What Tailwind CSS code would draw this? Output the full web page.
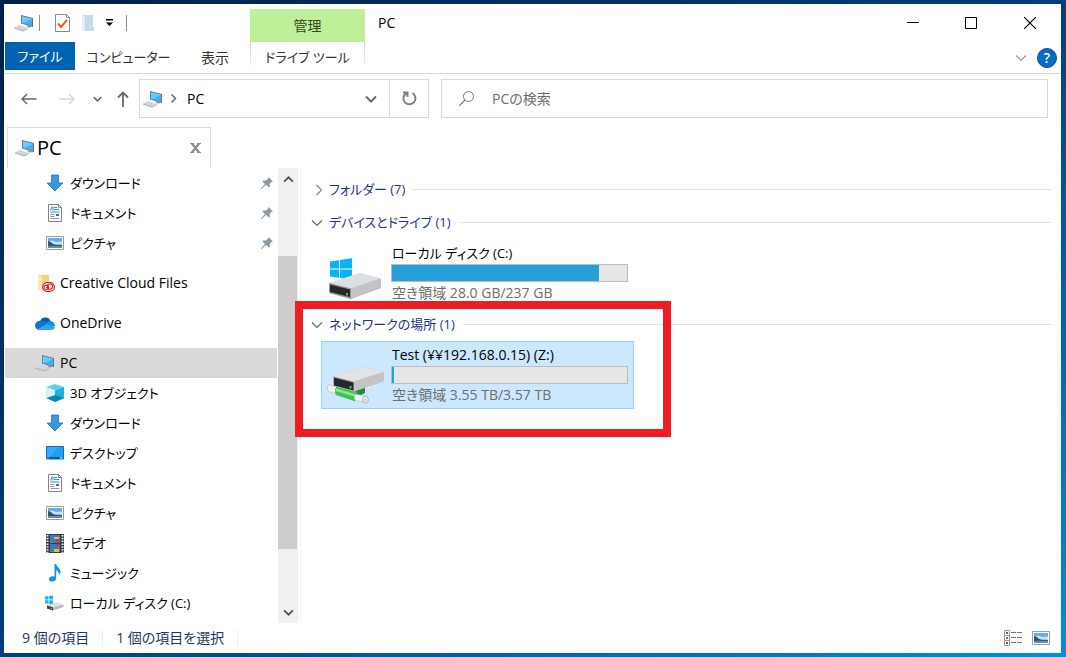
<!DOCTYPE html>
<html lang="ja">
<head>
  <meta charset="UTF-8" />
  <meta name="viewport" content="width=device-width, initial-scale=1.0" />
  <title>PC</title>
  <script src="https://cdn.jsdelivr.net/npm/@tailwindcss/browser@4"></script>
</head>
<body class="flex h-screen overflow-hidden bg-linear-to-br from-[#00204a] via-[#003f7d] to-[#0090dc] p-1 pr-[5px] font-['Open_Sans','Noto_Sans_CJK_JP',sans-serif] text-sm text-black [font-feature-settings:'palt']">

  <!-- アイコン定義 -->
  <svg class="hidden">
    <symbol id="i-pc" viewBox="0 0 20 18">
      <path d="M7 1l12 3v9L7 9.500z" fill="#5d6b76" />
      <path d="M7.800 2l10.400 2.700v7.200L7.800 8.900z" fill="#3fb0f5" />
      <path d="M7.800 2l10.400 2.700L9 9.200l-1.200-.3z" fill="#6cc8fb" />
      <path d="M12 12l3-1 3 1.500-3 1.300z" fill="#8b969e" />
      <path d="M0 13.500L5.500 11l8.500 3.200-5 2.800z" fill="#cfd6dc" />
      <path d="M0 13.500l9 3 5-2.300v.8l-5 2.500-9-3z" fill="#a5afb7" />
    </symbol>
    <symbol id="i-down" viewBox="0 0 18 18">
      <path d="M5.500 1h7v8H17l-8 8-8-8h4.500z" fill="#3b95e0" stroke="#2a77c4" stroke-width=".8" />
    </symbol>
    <symbol id="i-doc" viewBox="0 0 18 18">
      <path d="M2.500.5h10l3 3v14h-13z" fill="#fcfcfc" stroke="#858585" />
      <path d="M12.500.5v3h3" fill="none" stroke="#858585" />
      <path d="M4.500 6.500L6 3h1v3.500M8 3.500h3M8 5.500h5M4.500 8h9" fill="none" stroke="#2f8fd8" />
      <path d="M4.500 10.500h4M4.500 12.500h4M4.500 14.500h9" stroke="#9a9a9a" />
      <path d="M10 10h3v2h-3z" fill="#3c6e9e" />
    </symbol>
    <symbol id="i-pic" viewBox="0 0 18 14">
      <path d="M.5.500h17v13H.5z" fill="#fff" stroke="#9b9da0" />
      <path d="M2 2h14v10H2z" fill="#6aa9f0" />
      <path d="M2 5.500l4-1 4 1.500 6-.5V9H2z" fill="#c9e4f7" />
      <path d="M2 5c3 0 4 3 7 3.500s5 0 7 .5v1H2z" fill="#36566a" />
      <path d="M2 10h14v2H2z" fill="#5f8fb5" />
    </symbol>
    <symbol id="i-pin" viewBox="0 0 12 12">
      <path d="M7.500 0L12 4.500l-1.300.3-2 2.200.2 2.800-1 .7-2.800-2.700L.8 12 0 11.500l4-4.400L1.500 4.400l.8-1 2.700.2 2-2.200z" fill="#8d99a3" />
    </symbol>
    <symbol id="i-cc" viewBox="0 0 18 18">
      <path d="M1 1h11v15H1z" fill="#f5d27a" />
      <path d="M1 1l4 1.500V18l-4-2z" fill="#fde9ae" />
      <rect x="5" y="8" width="13" height="10" rx="5" fill="#fff" />
      <rect x="5.600" y="8.600" width="11.800" height="8.800" rx="4.400" fill="none" stroke="#da1f26" stroke-width="1.200" />
      <circle cx="9.300" cy="13.300" r="2.200" fill="none" stroke="#da1f26" stroke-width="1.100" />
      <circle cx="13" cy="12.600" r="2.600" fill="none" stroke="#da1f26" stroke-width="1.100" />
      <path d="M9 13l3.500 2.500" stroke="#da1f26" />
    </symbol>
    <symbol id="i-onedrive" viewBox="0 0 20 13">
      <path d="M5 4.500A5.600 5.600 0 0 1 15.500 4L12 8z" fill="#0a5cb0" />
      <path d="M5 3.800C2 4 0 6 0 8.600 0 11 1.900 13 4.300 13L13 6.500C10 4 7.500 3.500 5 3.800z" fill="#0f74d0" />
      <path d="M15.500 4c2.500.2 4.500 2.200 4.500 4.700l-4 2L11 7c1-2 2.500-3 4.500-3z" fill="#1b8de2" />
      <path d="M2 12.300L11.500 7 20 10.300c-.6 1.700-2 2.700-3.700 2.700H4.300c-.9 0-1.700-.3-2.300-.7z" fill="#2aa5ea" />
    </symbol>
    <symbol id="i-3d" viewBox="0 0 18 18">
      <path d="M9 0l9 3-9 3.500L0 3z" fill="#5fd0e4" />
      <path d="M0 3l9 3.500V18l-9-4z" fill="#b9ebf1" />
      <path d="M18 3L9 6.500V18l9-4z" fill="#16b4dc" />
      <path d="M9 11l9 3-9 4-9-4z" fill="#0b86ab" />
      <path d="M0 3l9 3.500V11l-9 3z" fill="#d3f3f6" />
    </symbol>
    <symbol id="i-desktop" viewBox="0 0 18 14">
      <path d="M.5.500h17v12.500H.5z" fill="#1ba1f7" stroke="#0d6db8" />
      <path d="M1 11h16v2H1z" fill="#0b5c9f" />
      <path d="M1.500 12h1M14 12h2.500" stroke="#fff" />
      <path d="M1 1h11L4 11H1z" fill="#35adfb" />
    </symbol>
    <symbol id="i-video" viewBox="0 0 18 19">
      <path d="M0 0h18v19H0z" fill="#3a3a3a" />
      <path d="M1.500 1v18M16.500 1v18" stroke="#e8e8e8" stroke-width="2" stroke-dasharray="1.500 1.300" />
      <path d="M4 1h10v8H4zM4 10h10v8H4z" fill="#3a77cf" />
      <path d="M8 3h5v2H8zM8 15h5v3H8z" fill="#e6c02c" />
      <path d="M10 5h3v3h-3zM10 10h3v2h-3z" fill="#cf3a22" />
      <path d="M4 6l4 3H4zM4 15l3 3H4z" fill="#5f9a45" />
    </symbol>
    <symbol id="i-music" viewBox="0 0 12 18">
      <path d="M5.500 0h1.700c.3 3 4.300 4 4.300 7.500 0 1.700-.8 3-1.700 3.800.6-2.800-.7-4.300-2.600-5V14c0 2-1.600 3.500-4 3.500C1.200 17.500 0 16.600 0 15.200c0-1.800 1.700-3 3.700-3 .7 0 1.300.1 1.800.4z" fill="#1193ee" />
    </symbol>
    <symbol id="i-disk-small" viewBox="0 0 20 16">
      <path d="M1 1.500l3.500-.5v3.500H1zM5.200 1L9 .5v4H5.200zM1 5.200h3.500v3.500L1 8.200zM5.200 5.200H9v4l-3.800-.5z" fill="#19b4ee" />
      <path d="M3 10.500L12 7.500l7.500 2v2.500L9 15.500l-6-2z" fill="#b9bbbe" />
      <path d="M3 10.500L12 7.500l7.500 2L9 12.500z" fill="#dfe1e3" />
      <path d="M3 10.500l6 2v3l-6-2z" fill="#3e4246" />
      <path d="M6.500 13h1.500v1H6.500z" fill="#3fdc4b" />
    </symbol>
    <symbol id="i-drive" viewBox="0 0 54 28">
      <path d="M1 12L32 1l21 6v9L23 27 1 21z" fill="#b4b5b9" />
      <path d="M1 11L32 .8 53 6.500 23 16.500z" fill="#dedfe2" />
      <path d="M23 16.500L53 6.500v9L23 26.500z" fill="#c3c4c8" />
      <path d="M1 11l22 5.500v10.300L1 21z" fill="#96989b" />
      <path d="M2 12.500l20 5v7.500L2 20z" fill="#26282a" />
      <path d="M18 21h2v2.500h-2z" fill="#35d435" />
    </symbol>
    <symbol id="i-winlogo" viewBox="0 0 22 22">
      <path d="M0 3.500l9-1.300V10.500H0zM10 2L22 .3v10.200H10zM0 11.500h9v8.300l-9-1.300zM10 11.500h12v10.200L10 20z" fill="#04b5f0" />
    </symbol>
    <symbol id="i-left" viewBox="0 0 16 12"><path d="M6 1L1 6l5 5M1 6h14.500" fill="none" stroke="currentColor" stroke-width="1.500" /></symbol>
    <symbol id="i-chev" viewBox="0 0 12 8"><path d="M1 1.500l5 5 5-5" fill="none" stroke="currentColor" stroke-width="1.200" /></symbol>
    <symbol id="i-chev-bold" viewBox="0 0 12 8"><path d="M1 1.500l5 5 5-5" fill="none" stroke="currentColor" stroke-width="2" /></symbol>
  </svg>

  <div class="flex min-w-0 flex-1 flex-col bg-white">

    <!-- タイトルバー -->
    <header>
      <div class="flex h-[38px]">
        <div class="flex w-[246px] items-center pl-2.5">
          <svg class="h-[18px] w-5"><use href="#i-pc" /></svg>
          <span class="ml-[5px] h-4 w-px bg-[#8c8c8c]"></span>
          <button aria-label="プロパティ" class="ml-[15px]">
            <svg class="h-[18px] w-[15px]" viewBox="0 0 15 18"><path d="M.5.500h11l3 3v14H.5z" fill="#fff" stroke="#8c8c8c" /><path d="M11.500.5v3h3" fill="none" stroke="#8c8c8c" /><path d="M3 9.500l3 3.500 6-7" fill="none" stroke="#ee5a1c" stroke-width="2" /></svg>
          </button>
          <button aria-label="新しいフォルダー" class="ml-3">
            <svg class="h-[18px] w-3" viewBox="0 0 12 18"><path d="M0 1h11v12h1v4H3z" fill="#c9d9ec" /><path d="M0 1l3 2v15l-3-2z" fill="#e3ecf7" /></svg>
          </button>
          <button aria-label="クイック アクセスのカスタマイズ" class="ml-3">
            <svg class="h-2 w-[7px]" viewBox="0 0 7 8"><path d="M0 0h7v1.500H0zM0 3.500h7L3.500 7z" fill="#000" /></svg>
          </button>
          <span class="ml-[13px] h-4 w-px bg-[#8c8c8c]"></span>
        </div>
        <div class="mt-[5px] flex w-[115px] items-center justify-center bg-[#c0ef9a] text-[#2f4a1c]">管理</div>
        <h1 class="ml-[13px] flex items-center">PC</h1>
        <div class="ml-auto flex items-center pr-[25px] text-black">
          <button aria-label="最小化" class="mr-[46px]"><svg class="size-3" viewBox="0 0 12 12"><path d="M0 5.500h12" stroke="currentColor" /></svg></button>
          <button aria-label="最大化" class="mr-[47px]"><svg class="size-3" viewBox="0 0 12 12"><path d="M.5.500h11v11H.5z" fill="none" stroke="currentColor" /></svg></button>
          <button aria-label="閉じる"><svg class="size-3" viewBox="0 0 12 12"><path d="M0 0l12 12M12 0L0 12" stroke="currentColor" stroke-width="1.200" /></svg></button>
        </div>
      </div>
      <nav class="flex h-8 border-b border-[#dadbdc] pl-px text-[13px] text-[#333]">
        <button class="mb-[3px] w-[70px] bg-[#0063b1] text-white">ファイル</button>
        <button class="w-[107px]">コンピューター</button>
        <button class="mr-0.5 w-[66px] text-sm">表示</button>
        <div class="flex w-[115px]">
          <span class="h-6 w-px bg-linear-to-b from-[#d0d0d0] to-[#f4f4f4]"></span>
          <button class="flex-1">ドライブ ツール</button>
          <span class="h-6 w-px bg-linear-to-b from-[#d0d0d0] to-[#f4f4f4]"></span>
        </div>
        <div class="ml-auto flex items-center gap-2.5 pr-1">
          <button aria-label="リボンの最小化" class="text-[#9a9a9a]"><svg class="h-2 w-3"><use href="#i-chev" /></svg></button>
          <button aria-label="ヘルプ" class="size-5 rounded-full border border-[#0b4f90] bg-[#0a6ac8] text-sm leading-4 font-semibold text-white">?</button>
        </div>
      </nav>
    </header>

    <!-- アドレスバー -->
    <div class="flex h-[53px] items-start pt-[5px] pr-[13px] pl-[17px] text-[#6b6b6b]">
      <div class="flex h-[39px] w-[118px] items-center">
        <button aria-label="戻る"><svg class="h-3 w-4"><use href="#i-left" /></svg></button>
        <button aria-label="進む" class="ml-[22px] text-[#d5d5d5]"><svg class="h-3 w-4"><use href="#i-left" class="origin-center rotate-180" /></svg></button>
        <button aria-label="最近表示した場所" class="ml-[18px]"><svg class="h-[6px] w-[9px]"><use href="#i-chev-bold" /></svg></button>
        <button aria-label="上へ" class="ml-[15px]"><svg class="h-4 w-3" viewBox="0 0 12 16"><path d="M1 6.500l5-5 5 5M6 1.500V16" fill="none" stroke="currentColor" stroke-width="1.800" /></svg></button>
      </div>
      <div class="flex h-[39px] w-[290px] border border-[#d9d9d9]">
        <div class="flex flex-1 items-center pl-[3px]">
          <svg class="h-[18px] w-5"><use href="#i-pc" /></svg>
          <svg class="mx-[7px] h-[9px] w-[7px]" viewBox="0 0 7 9"><path d="M1.500.500l4 4-4 4" fill="none" stroke="#6b6b6b" stroke-width="1.500" /></svg>
          <a href="#" class="ml-[3px] text-black">PC</a>
          <button aria-label="以前の場所" class="mr-3 ml-auto"><svg class="h-2 w-3"><use href="#i-chev-bold" /></svg></button>
        </div>
        <button aria-label="最新の情報に更新" class="flex w-[39px] items-center justify-center border-l border-[#d9d9d9]">
          <svg class="size-[15px]" viewBox="0 0 15 15"><path d="M10.500 2.200a6 6 0 1 1-6.300.1M1 1.500h4.500V6" fill="none" stroke="#7f7f7f" stroke-width="2" /></svg>
        </button>
      </div>
      <label class="ml-3 flex h-[39px] flex-1 items-center border border-[#d9d9d9] pl-[17px]">
        <svg class="size-[15px]" viewBox="0 0 15 15"><circle cx="9.500" cy="5.500" r="5" fill="none" stroke="#7a7a7a" /><path d="M6 9L0 15" stroke="#7a7a7a" stroke-width="1.200" /></svg>
        <input type="search" aria-label="PCの検索" placeholder="PCの検索" class="ml-[18px] flex-1 outline-none placeholder:text-[#6d6d6d]" />
      </label>
    </div>

    <!-- タブ -->
    <div class="ml-[3px] flex h-[41px] w-[204px] items-center border border-b-0 border-[#d9d9d9] pr-[9px] pl-[7px]">
      <svg class="h-[18px] w-5"><use href="#i-pc" /></svg>
      <span class="ml-0.5 text-xl">PC</span>
      <button aria-label="タブを閉じる" class="ml-auto"><svg class="h-2.5 w-[11px]" viewBox="0 0 11 10"><path d="M1.500 0l8 10M9.500 0l-8 10" stroke="#8a8a8a" stroke-width="2.200" /><path d="M0 .5h4M7 .5h4M0 9.500h4M7 9.500h4" stroke="#8a8a8a" /></svg></button>
    </div>

    <div class="flex min-h-0 flex-1">

      <!-- ナビゲーション ウィンドウ -->
      <nav class="ml-px w-[272px] overflow-hidden text-[13px]">
        <a href="#" class="flex h-[30px] items-center pr-1 pl-[41px]"><svg class="size-[18px]"><use href="#i-down" /></svg><span class="ml-1.5">ダウンロード</span><svg class="ml-auto size-3"><use href="#i-pin" /></svg></a>
        <a href="#" class="flex h-[30px] items-center pr-1 pl-[41px]"><svg class="size-[18px]"><use href="#i-doc" /></svg><span class="ml-1.5">ドキュメント</span><svg class="ml-auto size-3"><use href="#i-pin" /></svg></a>
        <a href="#" class="flex h-[30px] items-center pr-1 pl-[41px]"><svg class="h-[14px] w-[18px]"><use href="#i-pic" /></svg><span class="ml-1.5">ピクチャ</span><svg class="ml-auto size-3"><use href="#i-pin" /></svg></a>
        <a href="#" class="mt-2.5 flex h-[30px] items-center pl-8 text-sm"><svg class="size-[18px]"><use href="#i-cc" /></svg><span class="ml-[5px]">Creative Cloud Files</span></a>
        <a href="#" class="mt-2.5 flex h-[30px] items-center pl-[30px] text-sm"><svg class="h-[13px] w-5"><use href="#i-onedrive" /></svg><span class="ml-[5px]">OneDrive</span></a>
        <a href="#" aria-current="page" class="mt-2.5 flex h-[30px] items-center bg-[#d9d9d9] pl-[30px] text-sm"><svg class="h-[18px] w-5"><use href="#i-pc" /></svg><span class="ml-[5px]">PC</span></a>
        <a href="#" class="flex h-[30px] items-center pl-[41px]"><svg class="size-[18px]"><use href="#i-3d" /></svg><span class="ml-1.5">3D オブジェクト</span></a>
        <a href="#" class="flex h-[30px] items-center pl-[41px]"><svg class="size-[18px]"><use href="#i-down" /></svg><span class="ml-1.5">ダウンロード</span></a>
        <a href="#" class="flex h-[30px] items-center pl-[41px]"><svg class="h-[14px] w-[18px]"><use href="#i-desktop" /></svg><span class="ml-1.5">デスクトップ</span></a>
        <a href="#" class="flex h-[30px] items-center pl-[41px]"><svg class="size-[18px]"><use href="#i-doc" /></svg><span class="ml-1.5">ドキュメント</span></a>
        <a href="#" class="flex h-[30px] items-center pl-[41px]"><svg class="h-[14px] w-[18px]"><use href="#i-pic" /></svg><span class="ml-1.5">ピクチャ</span></a>
        <a href="#" class="flex h-[30px] items-center pl-[41px]"><svg class="h-[19px] w-[18px]"><use href="#i-video" /></svg><span class="ml-1.5">ビデオ</span></a>
        <a href="#" class="flex h-[30px] items-center pl-[44px]"><svg class="h-[18px] w-3"><use href="#i-music" /></svg><span class="ml-[9px]">ミュージック</span></a>
        <a href="#" class="flex h-[30px] items-center pl-[39px]"><svg class="h-4 w-5"><use href="#i-disk-small" /></svg><span class="ml-1.5">ローカル ディスク (C:)</span></a>
      </nav>

      <!-- スクロールバー -->
      <div class="ml-px flex w-5 flex-col items-center bg-[#f0f0f0] text-[#505050]">
        <button aria-label="上へスクロール" class="flex h-[22px] w-full items-center justify-center"><svg class="h-[7px] w-[11px]"><use href="#i-chev-bold" class="origin-center rotate-180" /></svg></button>
        <div class="flex w-full flex-1 flex-col pr-px">
          <div class="flex-[66]"></div>
          <div class="flex-[293] bg-[#cdcdcd]"></div>
          <div class="flex-[52]"></div>
        </div>
        <button aria-label="下へスクロール" class="flex h-[22px] w-full items-center justify-center"><svg class="h-[7px] w-[11px]"><use href="#i-chev-bold" /></svg></button>
      </div>

      <!-- ファイル一覧 -->
      <main class="ml-0.5 min-w-0 flex-1 border-l border-[#f3f3f3] pt-[5px] pr-2.5">
        <section>
          <h2 class="flex h-[33px] items-center pl-2.5 text-[13px] text-[#1e3287]">
            <svg class="mr-1.5 ml-1 h-3 w-2" viewBox="0 0 8 12"><path d="M1.500 1l5 5-5 5" fill="none" stroke="#8a8a8a" stroke-width="1.200" /></svg>フォルダー (7)
            <span class="ml-2 h-px flex-1 bg-[#e2e2e2]"></span>
          </h2>
        </section>
        <section>
          <h2 class="flex h-[33px] items-center pl-2.5 text-[13px] text-[#1e3287]">
            <svg class="mr-1.5 h-2 w-3 text-[#6a6a6a]"><use href="#i-chev" /></svg>デバイスとドライブ (1)
            <span class="ml-2 h-px flex-1 bg-[#e2e2e2]"></span>
          </h2>
          <button class="ml-5 flex h-[69px] w-[313px] border border-transparent pr-[5px] pl-1.5 text-left">
            <span class="flex w-[63px] flex-col pt-[18px]">
              <svg class="ml-0.5 size-[22px]"><use href="#i-winlogo" /></svg>
              <svg class="-mt-2 h-7 w-[54px]"><use href="#i-drive" /></svg>
            </span>
            <span class="flex-1 pt-0.5">
              <span class="block pl-px text-[13px] leading-[22px]">ローカル ディスク (C:)</span>
              <span class="flex h-[18px] border border-[#bcbcbc] bg-[#e6e6e6]"><span class="bg-[#26a0da]" style="width: 88%"></span></span>
              <span class="block pl-px leading-[22px] text-[#6d6d6d]">空き領域 28.0 GB/237 GB</span>
            </span>
          </button>
        </section>
        <section class="relative">
          <h2 class="flex h-[33px] items-center pl-2.5 text-[13px] text-[#1e3287]">
            <svg class="mr-1.5 h-2 w-3 text-[#6a6a6a]"><use href="#i-chev" /></svg>ネットワークの場所 (1)
            <span class="ml-2 h-px flex-1 bg-[#e2e2e2]"></span>
          </h2>
          <button class="ml-5 flex h-[68px] w-[313px] border border-[#99d1ff] bg-[#cce8ff] pr-[5px] pl-[5px] text-left">
            <svg class="mt-6 mr-1.5 h-[38px] w-[58px]" viewBox="0 0 58 38">
              <path d="M34 21l9-2c2 1 2 3 0 4l-9 2z" fill="#e9ebec" stroke="#bfc4c8" stroke-width=".5" />
              <path d="M25 25l13-4v6l-8 4-3 4z" fill="#1c8f3e" />
              <path d="M1.500 18.500L10 21v7L1.500 25.500c-1.500-2-1.500-5 0-7z" fill="#f1f2f3" stroke="#b5babe" stroke-width=".6" />
              <path d="M9.500 20.500L31 26c-3.500 2-3.500 6-2.500 9.500L9 29c-1.500-2.500-1.500-6 .5-8.500z" fill="#41c355" />
              <path d="M9 22.500l19 5.500-.5 2.500L8.500 25z" fill="#8be892" />
              <path d="M28.500 28L39 30.500v6.500L28 34c-1-2-.8-4.500.5-6z" fill="#eef0f1" stroke="#b5babe" stroke-width=".6" />
              <ellipse cx="38.500" cy="33.700" rx="2.800" ry="3.300" fill="#fff" stroke="#a3a8ac" />
              <ellipse cx="38.500" cy="33.700" rx="1.100" ry="1.500" fill="#b5babe" />
              <path d="M6 10L37 .5l20 5.500v9L27 25.500 6 20z" fill="#b4b5b9" />
              <path d="M6 10L37 .5l20 5.500-30 9.500z" fill="#e2e3e6" />
              <path d="M27 15.500L57 6v9L27 25.500z" fill="#c3c4c8" />
              <path d="M7 11.500l19.500 5v8L7 19.500z" fill="#26282a" />
              <path d="M22.500 20h2v2.500h-2z" fill="#35d435" />
            </svg>
            <span class="flex-1 pt-0.5">
              <span class="block pl-px leading-[22px]">Test (¥¥192.168.0.15) (Z:)</span>
              <span class="flex h-[18px] border border-[#bcbcbc] bg-[#e6e6e6]"><span class="bg-[#26a0da]" style="width: 1%"></span></span>
              <span class="block pl-px leading-[22px] text-[#6d6d6d]">空き領域 3.55 TB/3.57 TB</span>
            </span>
          </button>
          <!-- 強調枠 -->
          <div class="pointer-events-none absolute -top-[7px] -left-1.5 h-[136px] w-[376px] border-8 border-[#ee1c25]"></div>
        </section>
      </main>
    </div>

    <!-- ステータス バー -->
    <footer class="flex h-[30px] items-center pr-[11px] pl-[18px] text-[#1e395b]">
      <span>9 個の項目</span>
      <span class="mx-[13px] h-4 w-px bg-[#ececec]"></span>
      <span>1 個の項目を選択</span>
      <span class="ml-[13px] h-4 w-px bg-[#ececec]"></span>
      <button aria-label="詳細表示" class="ml-auto">
        <svg class="h-4 w-[18px]" viewBox="0 0 18 16"><path d="M.5.500h5v5h-5zM.5 5.500h5v5h-5zM.5 10.500h5v5h-5z" fill="#fff" stroke="#9b9b9b" /><path d="M2 2h2v2H2z" fill="#3d6f9c" /><path d="M2 7h2v2H2z" fill="#8a6f4c" /><path d="M2 12h2v2H2z" fill="#c03a20" /><path d="M7 2.500h5M13 2.500h5M7 7.500h5M13 7.500h5M7 12.500h5M13 12.500h5" stroke="#6f7478" /></svg>
      </button>
      <button aria-label="大アイコン表示" class="ml-2.5"><svg class="h-[14px] w-[18px]"><use href="#i-pic" /></svg></button>
    </footer>
  </div>
</body>
</html>
